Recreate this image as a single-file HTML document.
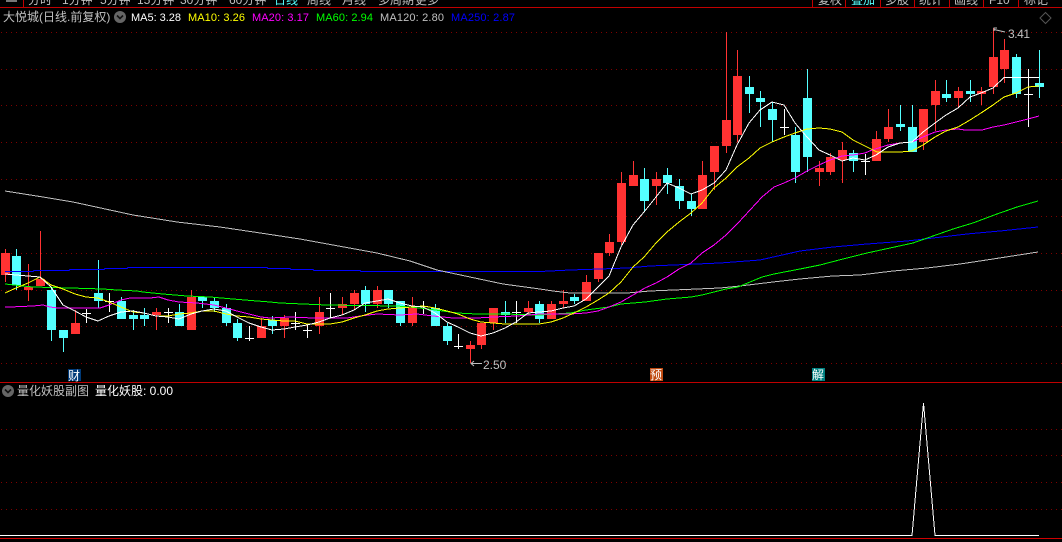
<!DOCTYPE html>
<html><head><meta charset="utf-8"><style>
html,body{margin:0;padding:0;background:#000;width:1062px;height:542px;overflow:hidden}
svg{display:block}
text{font-family:"Liberation Sans","WenQuanYi Zen Hei","Noto Sans CJK SC",sans-serif;font-size:12px;fill:#c0c0c0}
.l{fill:none;stroke-width:1;shape-rendering:crispEdges}
.c{shape-rendering:crispEdges}
</style></head><body>
<svg width="1062" height="542" viewBox="0 0 1062 542" xmlns="http://www.w3.org/2000/svg">
<rect width="1062" height="542" fill="#000"/>
<!-- top clipped toolbar -->
<g>
<text x="28" y="4">分时</text><text x="62" y="4">1分钟</text><text x="100" y="4">5分钟</text><text x="137" y="4">15分钟</text><text x="180" y="4">30分钟</text><text x="229" y="4">60分钟</text>
<text x="274" y="4" style="fill:#54ffff">日线</text><text x="307" y="4">周线</text><text x="342" y="4">月线</text><text x="378" y="4">多周期</text><text x="415" y="4">更多</text>
<text x="818" y="4">复权</text><text x="851" y="4" style="fill:#54ffff">叠加</text><text x="885" y="4">多股</text><text x="919" y="4">统计</text><text x="954" y="4">画线</text><text x="989" y="4">F10</text><text x="1024" y="4">标记</text>
</g>
<rect x="0" y="7" width="1062" height="535" fill="#000"/>
<path class="c" d="M0 0h24v7H0z" fill="#000"/>
<path class="c" d="M6 0h11v2H6z" fill="#777"/>
<path class="l" stroke="#c00000" d="M0 7.5H1062M23.5 0V7M812.5 0V7M845.5 0V7M880.5 0V7M914.5 0V7M949.5 0V7M983.5 0V7M1018.5 0V7"/>
<path d="M1045.5 12.5L1051 18L1045.5 23.5L1040 18Z" fill="none" stroke="#555" stroke-width="1"/>
<!-- grid -->
<path class="l" stroke="#800000" stroke-dasharray="1 4" d="M1 32.5H1062M1 69.5H1062M1 105.5H1062M1 142.5H1062M1 179.5H1062M1 216.5H1062M1 253.5H1062M1 290.5H1062M1 326.5H1062M1 363.5H1062M1 429.5H1062M1 455.5H1062M1 482.5H1062M1 509.5H1062"/>
<!-- header -->
<text x="3" y="21">大悦城(日线.前复权)</text>
<circle cx="120" cy="17" r="6" fill="#666"/><path d="M117 15.5l3 3l3-3" fill="none" stroke="#111" stroke-width="1.6"/>
<text x="131" y="21" style="font-size:11px;fill:#fff" textLength="50">MA5: 3.28</text>
<text x="188" y="21" style="font-size:11px;fill:#ff0" textLength="57">MA10: 3.26</text>
<text x="252" y="21" style="font-size:11px;fill:#f0f" textLength="57">MA20: 3.17</text>
<text x="316" y="21" style="font-size:11px;fill:#0f0" textLength="57">MA60: 2.94</text>
<text x="380" y="21" style="font-size:11px;fill:#c0c0c0" textLength="64">MA120: 2.80</text>
<text x="451" y="21" style="font-size:11px;fill:#00f" textLength="64">MA250: 2.87</text>
<!-- red wicks -->
<path class="l" stroke="#ff3232" d="M5.5 249V282M28.5 264V301M40.5 231V286M75.5 310V334M156.5 308V330M191.5 290V330M261.5 318V338M284.5 315V338M319.5 297V334M342.5 297V315M354.5 290V310M377.5 286V308M412.5 297V326M470.5 341V363M481.5 323V349M493.5 308V330M528.5 301V315M551.5 301V319M563.5 290V308M586.5 275V301M598.5 253V282M609.5 234V256M621.5 172V245M633.5 161V186M656.5 172V205M702.5 161V209M714.5 146V190M726.5 32V153M737.5 50V142M819.5 161V186M830.5 153V175M842.5 142V183M876.5 131V161M888.5 109V142M923.5 109V150M935.5 80V131M958.5 87V108M981.5 87V105M993.5 28V94M1004.5 39V83"/>
<!-- cyan wicks -->
<path class="l" stroke="#54ffff" d="M16.5 249V290M51.5 287V341M63.5 330V352M98.5 260V308M121.5 297V319M133.5 310V330M144.5 308V326M179.5 304V326M202.5 297V308M214.5 298V312M226.5 304V326M237.5 319V341M272.5 316V334M365.5 286V312M388.5 290V308M400.5 301V326M435.5 304V326M447.5 323V345M505.5 301V323M539.5 301V323M574.5 294V304M644.5 168V212M667.5 168V194M679.5 179V209M691.5 194V216M749.5 76V113M760.5 91V127M772.5 102V142M795.5 127V183M807.5 69V172M853.5 150V172M900.5 105V131M912.5 105V152M946.5 80V102M970.5 80V102M1016.5 54V98M1039.5 50V98"/>
<!-- white doji -->
<path class="l" stroke="#fff" d="M86.5 309V323M82 313.5h9M109.5 293V312M105 301.5h9M168.5 308V323M164 312.5h9M249.5 326V341M245 338.5h9M295.5 312V330M291 323.5h9M307.5 325V338M303 330.5h9M330.5 293V318M326 308.5h9M423.5 301V314M419 306.5h9M458.5 334V349M454 346.5h9M516.5 301V323M512 312.5h9M784.5 109V135M780 127.5h9M865.5 154V175M861 161.5h9M1028.5 69V127M1024 94.5h9"/>
<!-- red bodies -->
<path class="c" fill="#ff3232" d="M1 253h9V275h-9zM24 287h9V290h-9zM36 279h9V286h-9zM71 323h9V334h-9zM152 312h9V315h-9zM187 297h9V330h-9zM257 326h9V338h-9zM280 318h9V326h-9zM315 312h9V326h-9zM338 304h9V308h-9zM350 293h9V304h-9zM373 290h9V304h-9zM408 308h9V323h-9zM466 345h9V349h-9zM477 323h9V345h-9zM489 308h9V323h-9zM524 308h9V312h-9zM547 304h9V319h-9zM559 301h9V304h-9zM582 282h9V301h-9zM594 253h9V279h-9zM605 242h9V253h-9zM617 183h9V242h-9zM629 175h9V186h-9zM652 179h9V186h-9zM698 175h9V209h-9zM710 146h9V172h-9zM722 120h9V146h-9zM733 76h9V135h-9zM815 168h9V172h-9zM826 157h9V172h-9zM838 150h9V160h-9zM872 139h9V161h-9zM884 127h9V139h-9zM919 109h9V142h-9zM931 91h9V105h-9zM954 91h9V98h-9zM977 91h9V94h-9zM989 57h9V87h-9zM1000 50h9V69h-9z"/>
<!-- cyan bodies -->
<path class="c" fill="#54ffff" d="M12 256h9V285h-9zM47 290h9V330h-9zM59 330h9V338h-9zM94 293h9V301h-9zM117 301h9V319h-9zM129 315h9V319h-9zM140 315h9V319h-9zM175 312h9V326h-9zM198 297h9V301h-9zM210 301h9V308h-9zM222 308h9V323h-9zM233 323h9V338h-9zM268 320h9V326h-9zM361 290h9V304h-9zM384 290h9V304h-9zM396 301h9V323h-9zM431 308h9V326h-9zM443 326h9V341h-9zM501 312h9V315h-9zM535 304h9V319h-9zM570 297h9V301h-9zM640 179h9V201h-9zM663 175h9V183h-9zM675 186h9V201h-9zM687 201h9V209h-9zM745 87h9V94h-9zM756 98h9V102h-9zM768 109h9V120h-9zM791 135h9V172h-9zM803 98h9V157h-9zM849 153h9V161h-9zM896 124h9V127h-9zM908 127h9V152h-9zM942 94h9V98h-9zM966 91h9V94h-9zM1012 57h9V94h-9zM1035 83h9V87h-9z"/>
<!-- MA250 -->
<polyline class="l" stroke="#0000ff" points="5,271.5 33,271.5 34,270.5 69,270.5 70,269.5 104,269.5 105,268.5 127,268.5 128,267.5 267,267.5 268,268.5 290,268.5 291,269.5 313,269.5 314,270.5 360,270.5 361,271.5 540,271.5 570,270 600,269 627,268 650,266 697,264 720,263 760,260 800,251 833,247 867,244 907,241 933,238 967,234 1000,231 1038,227"/>
<!-- MA120 -->
<polyline class="l" stroke="#c0c0c0" points="5,191 43,197 73,202 133,215 177,222 220,227 267,234 300,239 333,245 377,253 410,261 437,270 470,277 503,284 540,289 553,291 570,293 627,293 650,291 697,289 720,288 740,286 773,282 800,279 833,276 860,275 893,271 927,268 960,264 993,259 1038,252"/>
<!-- MA60 -->
<polyline class="l" stroke="#00ff00" points="5,284 23,286 33,287 70,288 103,289 117,290 137,291 143,292 163,294 187,296 210,297 233,299 257,301 270,302 280,303 303,304 327,305 397,306 420,308 443,311 457,313 477,314 503,314 540,315 570,313 586,310 609,307 621,304 645,302 667,299 691,297 702,295 714,292 726,289 738,287 750,282 762,277 774,274 800,269 820,265 843,259 867,253 890,248 913,243 933,236 953,229 973,223 997,214 1017,207 1038,201"/>
<!-- MA20 -->
<polyline class="l" stroke="#ff00ff" points="5,307 10,307 33,306 43,305 50,307 58,308 100,308 109,305 121,300 130,298 150,298 159,297 168,300 179,302 197,303 214,305 226,308 237,311 249,314 261,317 270,318 290,317 313,318 347,318 360,316 377,314 400,315 417,314 433,316 453,318 477,318 493,317 517,316 540,314 570,314 586,313 598,311 609,307 621,302 633,295 645,288 656,283 667,277 679,269 691,263 702,253 714,245 726,235 738,223 750,210 762,197 774,187 784,183 795,178 807,171 819,165 830,160 842,156 853,155 865,153 872,150 888,145 900,143 912,142 923,137 935,132 946,130 958,129 965,130 982,130 993,127 1004,125 1016,122 1028,119 1039,116"/>
<!-- MA10 -->
<polyline class="l" stroke="#ffff00" points="5,293 16,288 28,283 40,277 51,285 63,289 75,294 86,297 98,298 109,302 121,307 133,312 144,313 156,316 168,316 179,314 191,313 202,311 214,311 226,314 237,316 249,317 261,319 272,320 284,321 295,321 307,324 319,324 330,324 342,322 354,318 365,315 377,311 388,309 400,308 412,307 423,306 435,308 447,311 458,314 470,319 481,322 493,323 505,324 516,324 528,324 539,324 551,322 563,318 574,313 586,307 598,300 609,293 621,282 633,267 644,257 656,243 667,232 679,222 691,213 702,203 714,188 726,178 737,167 749,158 760,148 772,142 784,137 795,133 807,129 819,128 830,129 842,132 853,140 865,146 877,152 888,152 900,152 912,151 923,145 935,137 946,131 958,127 970,120 981,113 993,105 1004,97 1016,93 1028,87 1039,86"/>
<!-- MA5 -->
<polyline class="l" stroke="#ffffff" points="5,274 16,275 28,276 40,277 51,287 63,305 75,311 86,317 98,321 109,316 121,312 133,311 144,313 156,316 168,317 179,319 191,314 202,311 214,309 226,311 237,317 249,323 261,327 272,330 284,329 295,327 307,325 319,322 330,318 342,315 354,310 365,303 377,301 388,299 400,303 412,306 423,307 435,313 447,322 458,327 470,333 481,336 493,333 505,328 516,322 528,313 539,312 551,311 563,308 574,306 586,299 598,287 609,276 621,247 633,225 644,212 656,197 667,183 679,188 691,194 702,190 714,183 726,170 737,145 749,123 760,110 772,102 784,105 795,123 807,137 819,150 830,155 842,161 853,158 865,160 876,155 888,147 900,143 912,142 923,132 935,123 946,115 958,108 970,97 981,93 993,88 1004,77.5 1039,77.5"/>
<!-- annotations -->
<path d="M482 363.5H471M474 361l-3 2.5l3 2.5" fill="none" stroke="#c0c0c0" stroke-width="1"/>
<text x="483" y="369">2.50</text>
<path d="M1005 32L994 29.5M997 28h-3v3" fill="none" stroke="#c0c0c0" stroke-width="1"/>
<text x="1008" y="38" textLength="22">3.41</text>
<!-- markers -->
<rect class="c" x="68" y="369" width="13" height="12" fill="#003a78"/><text x="68" y="380" style="fill:#fff">财</text>
<rect class="c" x="650" y="368" width="13" height="13" fill="#c04a10"/><text x="650" y="379" style="fill:#fff">预</text>
<rect class="c" x="812" y="368" width="13" height="13" fill="#008080"/><text x="812" y="379" style="fill:#fff">解</text>
<!-- separator -->
<path class="l" stroke="#c00000" d="M0 382.5H1062"/>
<!-- sub panel header -->
<circle cx="8" cy="391" r="6" fill="#666"/><path d="M5 389.5l3 3l3-3" fill="none" stroke="#111" stroke-width="1.6"/>
<text x="17" y="395">量化妖股副图</text>
<text x="95" y="395" style="fill:#fff">量化妖股: 0.00</text>
<!-- spike -->
<path class="l" stroke="#fff" d="M0 535.5H912L923.5 403L935 535.5H1039"/>
<path class="l" stroke="#d00000" d="M0 538.5H1062"/>
</svg>
</body></html>
